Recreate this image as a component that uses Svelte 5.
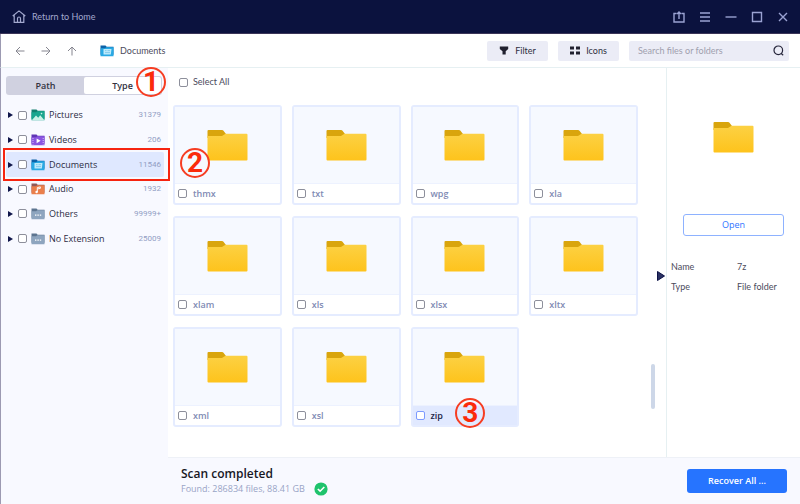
<script lang="ts">
	/** File browser shown once a recovery scan has finished. */
	interface Category {
		name: string;
		count: string;
		icon: 'picture' | 'video' | 'document' | 'audio' | 'other';
		active?: boolean;
	}

	const categories: Category[] = [
		{ name: 'Pictures', count: '31379', icon: 'picture' },
		{ name: 'Videos', count: '206', icon: 'video' },
		{ name: 'Documents', count: '11546', icon: 'document', active: true },
		{ name: 'Audio', count: '1932', icon: 'audio' },
		{ name: 'Others', count: '99999+', icon: 'other' },
		{ name: 'No Extension', count: '25009', icon: 'other' }
	];

	const folders = ['thmx', 'txt', 'wpg', 'xla', 'xlam', 'xls', 'xlsx', 'xltx', 'xml', 'xsl', 'zip'];

	const folderColors = {
		picture: ['#12806f', '#1aa68f'],
		video: ['#5f35b5', '#8a55e0'],
		document: ['#0c62a8', '#29a9e4'],
		audio: ['#8f5a5a', '#ea7f4c'],
		other: ['#5d7590', '#8ea5bf']
	};

	let selected = $state('zip');
</script>

{#snippet categoryIcon(icon: Category['icon'])}
	<svg class="category-icon" viewBox="0 0 14 12" aria-hidden="true">
		<path d="M.5.500h5l1.200 1.300h6.800v8h-13z" fill={folderColors[icon][0]} />
		<path d="M.5 3.200h4.600l1.200-.9h7.200v9h-13z" fill={folderColors[icon][1]} />
		{#if icon === 'picture'}
			<path d="M1 11l4-4.400 2.200 2.200 2-2.600 4 4.800z" fill="#c9f2e6" />
			<circle cx="10.500" cy="4.600" r=".8" fill="#c9f2e6" />
		{:else if icon === 'video'}
			<path d="M5.600 4.400l4 2.400-4 2.400z" fill="#fff" />
			<path d="M2 4v6.500M12.200 4v6.500" stroke="#d4bdf8" stroke-dasharray="1 1" />
		{:else if icon === 'document'}
			<path d="M3.500 4h8l-.7 5.500h-7.300z" fill="#bdeafb" />
			<path d="M5 5.600h1.500M7.500 5.600h2.500M5 7.600h5" stroke="#6cbfe4" stroke-width=".7" />
		{:else if icon === 'audio'}
			<path d="M6.300 9V4.600l3-.7v1.500l-2.400.5" fill="none" stroke="#fff" />
			<circle cx="5.600" cy="9" r="1.200" fill="#fff" />
		{:else}
			<path d="M4 7.200h1.400M6.400 7.200h1.400M8.800 7.200h1.400" stroke="#fff" stroke-width="1.200" />
		{/if}
	</svg>
{/snippet}

{#snippet folderIcon()}
	<svg class="folder-icon" viewBox="0 0 41 32" aria-hidden="true">
		<defs>
			<linearGradient id="folder-front" x1="0" y1="0" x2="0" y2="1">
				<stop offset="0" stop-color="#fcd143" />
				<stop offset="1" stop-color="#fec31c" />
			</linearGradient>
		</defs>
		<path d="M1.500 1H15q1 0 1.500.7L19 5v4H.5V2q0-1 1-1z" fill="#d9a50d" />
		<path d="M.5 7h14.500l3.500-2.200H39.500q1 0 1 1v24.700q0 1-1 1H1.500q-1 0-1-1z" fill="url(#folder-front)" />
	</svg>
{/snippet}

<div class="app">
	<header class="titlebar">
		<a class="home" href="#home">
			<svg width="14" height="13" viewBox="0 0 14 13" fill="none" stroke="#a3a9cf" stroke-width="1.200" aria-hidden="true">
				<path d="M.7 6L7 .9 13.300 6M2.200 5v7.300h9.600V5M5.500 12V8.500a1.500 1.500 0 0 1 3 0V12" />
			</svg>
			Return to Home
		</a>
		<div class="window-buttons">
			<button aria-label="Export">
				<svg viewBox="0 0 12 12"><path d="M3.500 2.500H1v8.500h10V2.500H8.500M6 8V1.500M4 3l2-2 2 2" /></svg>
			</button>
			<button aria-label="Menu">
				<svg viewBox="0 0 12 12"><path d="M1 2h10M1 6h10M1 10h10" /></svg>
			</button>
			<button aria-label="Minimize">
				<svg viewBox="0 0 12 12"><path d="M.5 6h11" /></svg>
			</button>
			<button aria-label="Maximize">
				<svg viewBox="0 0 12 12"><path d="M1.500 1.500h9v9h-9z" /></svg>
			</button>
			<button aria-label="Close">
				<svg viewBox="0 0 12 12"><path d="M2 2l8 8M10 2l-8 8" /></svg>
			</button>
		</div>
	</header>

	<nav class="toolbar">
		<div class="arrows">
			<button aria-label="Back"><svg viewBox="0 0 10 10"><path d="M9.500 5H1M5 1L1 5l4 4" /></svg></button>
			<button aria-label="Forward"><svg viewBox="0 0 10 10"><path d="M.5 5H9M5 1l4 4-4 4" /></svg></button>
			<button aria-label="Up"><svg viewBox="0 0 10 10"><path d="M5 9.500V1M1 5l4-4 4 4" /></svg></button>
		</div>
		<div class="crumb">{@render categoryIcon('document')}Documents</div>
		<div class="tools">
			<button class="tool">
				<svg width="10" height="9" viewBox="0 0 10 9" aria-hidden="true"><path d="M.8.500h8.400V3L6.700 5.300v3.200H3.500V5.300L.8 3z" fill="#20202f" /></svg>
				Filter
			</button>
			<button class="tool">
				<svg width="10" height="9" viewBox="0 0 10 9" aria-hidden="true"><path d="M0 .5h4v3H0zM6 .5h4v3H6zM0 5.500h4v3H0zM6 5.500h4v3H6z" fill="#20202f" /></svg>
				Icons
			</button>
			<label class="search">
				<input type="text" placeholder="Search files or folders" aria-label="Search files or folders" />
				<svg width="11" height="11" viewBox="0 0 11 11" fill="none" stroke="#25253a" stroke-width="1.200" aria-hidden="true">
					<circle cx="5.300" cy="5.300" r="4.300" /><path d="M8 8.300L10.200 10.300" />
				</svg>
			</label>
		</div>
	</nav>

	<div class="body">
		<aside class="sidebar">
			<div class="tabs">
				<button class="tab tab--path">Path</button>
				<button class="tab">Type</button>
				<span class="step step--type">1</span>
			</div>
			<ul class="categories">
				{#each categories as category}
					<li class:active={category.active}>
						<svg class="caret" width="5" height="6" viewBox="0 0 5 6" aria-hidden="true"><path d="M0 0l5 3-5 3z" fill="#10164b" /></svg>
						<input id="cat-{category.name}" type="checkbox" />
						<label for="cat-{category.name}">{@render categoryIcon(category.icon)}{category.name}</label>
						<span class="count">{category.count}</span>
						{#if category.active}
							<span class="outline"></span>
							<span class="step step--documents">2</span>
						{/if}
					</li>
				{/each}
			</ul>
		</aside>

		<div class="content">
			<div class="panes">
				<main class="files">
					<label class="select-all"><input type="checkbox" />Select All</label>
					<div class="grid">
						{#each folders as name}
							<div class="card" class:selected={name === selected}>
								<button class="preview" aria-label="Show {name}" onclick={() => (selected = name)}>
									{@render folderIcon()}
								</button>
								<label><input type="checkbox" />{name}</label>
								{#if name === 'zip'}
									<span class="step step--zip">3</span>
								{/if}
							</div>
						{/each}
					</div>
					<div class="scroll-thumb"></div>
					<button class="collapse" aria-label="Hide details">
						<svg width="8" height="10" viewBox="0 0 8 10"><path d="M.5.500L7.500 5 .5 9.500z" fill="#2a3163" stroke="#0b1145" /></svg>
					</button>
				</main>
				<section class="details">
					{@render folderIcon()}
					<button class="open">Open</button>
					<dl>
						<dt>Name</dt>
						<dd>7z</dd>
						<dt>Type</dt>
						<dd>File folder</dd>
					</dl>
				</section>
			</div>

			<footer class="status">
				<div>
					<h1>Scan completed</h1>
					<p>
						Found: 286834 files, 88.41 GB
						<svg width="14" height="14" viewBox="0 0 14 14" aria-hidden="true">
							<circle cx="7" cy="7" r="6.600" fill="#1fc36c" />
							<path d="M3.800 7l2.300 2.200 4.200-4.200" fill="none" stroke="#fff" stroke-width="1.600" />
						</svg>
					</p>
				</div>
				<button class="recover">Recover All ...</button>
			</footer>
		</div>
	</div>
</div>

<style>
	:global(body) {
		margin: 0;
		background: #fff;
	}

	.app {
		min-height: 100vh;
		display: flex;
		flex-direction: column;
		font: 9px/12px Lato, 'Open Sans', sans-serif;
		color: #4b4b5c;
	}

	.app * {
		box-sizing: border-box;
	}

	button,
	input {
		font: inherit;
		color: inherit;
		margin: 0;
		padding: 0;
		border: 0;
		background: none;
	}

	svg {
		display: block;
		flex: none;
	}

	input[type='checkbox'] {
		appearance: none;
		flex: none;
		width: 9px;
		height: 9px;
		border: 1px solid #8d8f9b;
		border-radius: 2px;
		background: #fff;
	}

	.titlebar {
		height: 34px;
		display: flex;
		align-items: center;
		justify-content: space-between;
		padding: 0 11px 0 12px;
		background: #0b123e;
		border-bottom: 1px solid #3b3558;
	}

	.home {
		display: flex;
		align-items: center;
		gap: 6px;
		color: #a3a9cf;
		text-decoration: none;
	}

	.window-buttons {
		display: flex;
		gap: 14px;
	}

	.window-buttons svg {
		width: 12px;
		height: 12px;
		fill: none;
		stroke: #9aa2d2;
		stroke-width: 1.4;
	}

	.toolbar {
		height: 34px;
		display: flex;
		align-items: center;
		padding: 0 11px 0 14px;
		border-bottom: 1px solid #e6f0f2;
		border-left: 1px solid #9c9ab2;
	}

	.arrows {
		display: flex;
		gap: 16px;
	}

	.arrows svg {
		width: 10px;
		height: 10px;
		fill: none;
		stroke: #85858f;
	}

	.crumb {
		display: flex;
		align-items: center;
		gap: 6px;
		margin-left: 23px;
	}

	.category-icon {
		width: 14px;
		height: 12px;
	}

	.tools {
		display: flex;
		gap: 10px;
		margin-left: auto;
	}

	.tool {
		height: 20px;
		width: 61px;
		display: flex;
		align-items: center;
		justify-content: center;
		gap: 6px;
		border-radius: 2px;
		background: #ebecf6;
		color: #2f2f3e;
	}

	.search {
		width: 160px;
		height: 20px;
		display: flex;
		align-items: center;
		padding: 0 5px 0 9px;
		border-radius: 2px;
		background: #ebecf6;
	}

	.search input {
		flex: 1;
		min-width: 0;
		outline: 0;
	}

	.search input::placeholder {
		color: #a0a0ae;
		opacity: 1;
	}

	.body {
		flex: 1;
		display: flex;
	}

	.sidebar {
		flex: none;
		width: 168px;
		padding: 8px 4px 0 5px;
		background: #f8f9ff;
		border-left: 1px solid #9c9ab2;
		font-family: 'Open Sans', sans-serif;
	}

	.tabs {
		position: relative;
		display: flex;
		height: 19px;
		margin-right: 2px;
		padding: 1px;
		border-radius: 3px;
		background: #d0d1e0;
	}

	.tab {
		flex: 1;
		border-radius: 2px;
		background: #fff;
		color: #33333f;
		font-weight: 600;
	}

	.tab--path {
		background: none;
	}

	.categories {
		display: grid;
		grid-auto-rows: 1fr;
		height: 148px;
		margin: 8px 0 0;
		padding: 0;
		list-style: none;
		color: #2c2c44;
		font-weight: 500;
	}

	.categories li {
		position: relative;
		display: flex;
		align-items: center;
		gap: 4px;
		padding: 0 3px 0 2px;
		border-radius: 2px;
	}

	.categories li.active {
		background: #dfe8ff;
	}

	.caret {
		margin-right: 1px;
	}

	.categories label {
		flex: 1;
		display: flex;
		align-items: center;
		gap: 4px;
	}

	.count {
		color: #929ec4;
		font: 8px/12px Roboto, sans-serif;
	}

	.outline {
		position: absolute;
		inset: -4px -6px -4px -3px;
		border: 2px solid #f62410;
		pointer-events: none;
	}

	/* Numbered guide markers sit on top of the controls they point at. */
	.step {
		position: absolute;
		z-index: 1;
		width: 30px;
		height: 30px;
		border: 2px solid #f63d22;
		border-radius: 50%;
		color: #fb2b0b;
		font: 700 28px/26px Roboto, sans-serif;
		text-align: center;
		pointer-events: none;
	}

	.step--type {
		top: -9px;
		right: -4px;
	}

	.step--documents {
		top: -4px;
		right: -46px;
	}

	.step--zip {
		right: 32px;
		bottom: -3px;
	}

	.content {
		flex: 1;
		min-width: 0;
		display: flex;
		flex-direction: column;
	}

	.panes {
		flex: 1;
		display: flex;
	}

	.files {
		position: relative;
		flex: 1;
		padding: 8px 28px 20px 5px;
	}

	.select-all {
		display: flex;
		align-items: center;
		gap: 5px;
		width: max-content;
		margin: 0 0 17px 6px;
	}

	.grid {
		display: grid;
		grid-template-columns: repeat(4, 1fr);
		gap: 11px 10px;
	}

	.card {
		position: relative;
		height: 100px;
		display: flex;
		flex-direction: column;
		border: 2px solid #e5ecff;
		border-radius: 3px;
		font-family: 'Open Sans', sans-serif;
	}

	.preview {
		flex: 1;
		display: flex;
		align-items: center;
		justify-content: center;
		background: #f6f9ff;
		border-bottom: 1px solid #edf2ff;
	}

	.folder-icon {
		width: 41px;
		height: 32px;
	}

	.card label {
		height: 19px;
		display: flex;
		align-items: center;
		gap: 6px;
		padding-left: 3px;
		color: #7f8bb4;
		font-weight: 600;
	}

	.card.selected label {
		background: #e1e9ff;
		color: #1d2547;
	}

	.card.selected input {
		border-color: #7d9bff;
	}

	.scroll-thumb {
		position: absolute;
		right: 11px;
		bottom: 48px;
		width: 4px;
		height: 45px;
		border-radius: 2px;
		background: #cdd7e8;
	}

	.collapse {
		position: absolute;
		top: 203px;
		right: 1px;
	}

	.details {
		flex: none;
		width: 134px;
		display: flex;
		flex-direction: column;
		align-items: center;
		padding-top: 53px;
		border-left: 1px solid #e6f0f2;
	}

	.open {
		width: 101px;
		height: 22px;
		margin-top: 61px;
		border: 1px solid #8eb2ff;
		border-radius: 3px;
		color: #2f74ff;
		font-family: 'Open Sans', sans-serif;
		font-weight: 500;
	}

	dl {
		align-self: stretch;
		display: grid;
		grid-template-columns: 66px 1fr;
		gap: 8px 0;
		margin: 25px 0 0;
		padding-left: 4px;
	}

	dd {
		margin: 0;
	}

	.status {
		height: 47px;
		display: flex;
		align-items: center;
		justify-content: space-between;
		padding: 0 13px;
		background: #f8f9ff;
		border-top: 1px solid #eef1f7;
		font-family: 'Open Sans', sans-serif;
	}

	h1 {
		margin: 0;
		color: #17171f;
		font-size: 12px;
		font-weight: 600;
		line-height: 16px;
	}

	.status p {
		display: flex;
		align-items: center;
		gap: 9px;
		margin: 0;
		color: #98a4c6;
	}

	.recover {
		width: 100px;
		height: 24px;
		border-radius: 3px;
		background: #2674ff;
		color: #fff;
		font-weight: 600;
	}
</style>
